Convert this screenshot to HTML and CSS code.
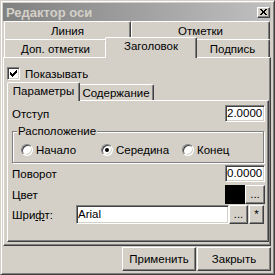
FILE: index.html
```html
<html>
    <head>
        <link rel="stylesheet" href="styles.css">
    </head>
    <body>
        <div class="window">
            <div class="titlebar">
                <span class="title">Редактор оси</span>
                <span class="close-btn">
                    <svg width="7" height="6" viewBox="0 0 7 6" shape-rendering="crispEdges">
                        <path d="M0 0h2v1h-2z M5 0h2v1h-2z M1 1h2v1h-2z M4 1h2v1h-2z M2 2h3v2h-3z M1 4h2v1h-2z M4 4h2v1h-2z M0 5h2v1h-2z M5 5h2v1h-2z" fill="#000"/>
                    </svg>
                </span>
            </div>

            <div class="tabs">
                <div class="tabrow">
                    <div class="tab w-line">Линия</div>
                    <div class="tab w-marks">Отметки</div>
                </div>
                <div class="tabrow">
                    <div class="tab w-extra">Доп. отметки</div>
                    <div class="tab w-title active">Заголовок</div>
                    <div class="tab w-sign">Подпись</div>
                </div>
            </div>

            <div class="panel">
                <div class="check-row">
                    <span class="checkbox">
                        <svg width="7" height="7" viewBox="0 0 7 7" shape-rendering="crispEdges">
                            <path d="M6 0h1v1h-1z M5 1h2v1h-2z M0 2h1v1h-1z M4 2h3v1h-3z M0 3h2v1h-2z M3 3h3v1h-3z M0 4h5v1h-5z M1 5h3v1h-3z M2 6h1v1h-1z" fill="#000"/>
                        </svg>
                    </span>
                    <span>Показывать</span>
                </div>

                <div class="subtabs">
                    <div class="subtab w-params active">Параметры</div>
                    <div class="subtab w-content">Содержание</div>
                </div>

                <div class="subpanel">
                    <div class="row">
                        <span>Отступ</span>
                        <span class="field num">2.0000</span>
                    </div>

                    <fieldset class="group">
                        <legend>Расположение</legend>
                        <div class="radios">
                            <div class="radio-opt"><span class="radio"></span>Начало</div>
                            <div class="radio-opt"><span class="radio on"></span>Середина</div>
                            <div class="radio-opt"><span class="radio"></span>Конец</div>
                        </div>
                    </fieldset>

                    <div class="row row-turn">
                        <span>Поворот</span>
                        <span class="field num">0.0000</span>
                    </div>

                    <div class="row row-color">
                        <span>Цвет</span>
                        <span class="picker">
                            <span class="swatch"></span>
                            <span class="btn-small">...</span>
                        </span>
                    </div>

                    <div class="row row-font">
                        <span class="font-label">Шри<u>ф</u>т:</span>
                        <span class="field font-field">Arial</span>
                        <span class="btn-small w-dots">...</span>
                        <span class="btn-small w-star">*</span>
                    </div>
                </div>
            </div>

            <div class="footer">
                <div class="btn">Применить</div>
                <div class="btn">Закрыть</div>
            </div>
        </div>
    </body>
</html>
```

FILE: styles.css
```css
body{
    margin: 0;
    background-color: #d4d0c8;
    font-family: "Liberation Sans", Arial, sans-serif;
    font-size: 11.5px;
    color: #000;
}
.window{
    width: 275px;
    height: 275px;
    box-sizing: border-box;
    border: 1px solid;
    border-color: #d4d0c8 #404040 #404040 #d4d0c8;
    box-shadow: inset 1px 1px #fff, inset -1px -1px #808080;
    padding: 2px 3px 2px 2px;
    display: flex;
    flex-direction: column;
}
.titlebar{
    height: 18px;
    flex: none;
    display: flex;
    align-items: center;
    justify-content: space-between;
    padding: 0 1px 0 3px;
    background: linear-gradient(to right, #808080, #c0c0c0);
}
.title{
    color: #d4d0c8;
    font-weight: bold;
    font-size: 13px;
}
.close-btn{
    width: 13px;
    height: 11px;
    box-sizing: border-box;
    background: #d4d0c8;
    border: 1px solid;
    border-color: #fff #404040 #404040 #fff;
    box-shadow: inset -1px -1px #808080;
    display: flex;
    align-items: center;
    justify-content: center;
}

/* tabs */
.tabs{
    display: flex;
    flex-direction: column;
    padding-left: 1px;
}
.tabrow, .subtabs{
    display: flex;
    height: 18px;
}
.tab, .subtab{
    box-sizing: border-box;
    height: 18px;
    border: 1px solid;
    border-color: #fff #404040 transparent #fff;
    border-bottom: none;
    border-radius: 2px 2px 0 0;
    box-shadow: inset -1px 0 #808080;
    background: #d4d0c8;
    padding-top: 3px;
    line-height: 13px;
    text-align: center;
    white-space: nowrap;
}
.tab.active, .subtab.active{
    position: relative;
    z-index: 1;
    margin: -2px -2px 0 -2px;
    padding-top: 2px;
}
.tab.active{
    height: 21px;
}
.w-line{ width: 127px; }
.w-marks{ width: 139px; }
.w-extra{ width: 103px; }
.w-title{ width: 92px; }
.w-sign{ width: 75px; }

.panel{
    height: 189px;
    flex: none;
    box-sizing: border-box;
    border: 1px solid;
    border-color: #fff #404040 #404040 #fff;
    box-shadow: inset -1px -1px #808080;
    padding: 0 1px 3px 3px;
}
.check-row{
    display: flex;
    align-items: center;
    gap: 5px;
    height: 13px;
    margin-top: 9px;
}
.checkbox{
    width: 13px;
    height: 13px;
    box-sizing: border-box;
    background: #fff;
    border: 1px solid;
    border-color: #808080 #fff #fff #808080;
    box-shadow: inset 1px 1px #404040, inset -1px -1px #d4d0c8;
    display: flex;
    align-items: center;
    justify-content: center;
}

.subtabs{
    height: 16px;
    margin-top: 4px;
    padding-left: 2px;
}
.subtab{
    height: 16px;
    padding-top: 2px;
}
.subtab.active{
    height: 19px;
}
.w-params{ width: 73px; }
.w-content{ width: 76px; }

.subpanel{
    height: 142px;
    box-sizing: border-box;
    border: 1px solid;
    border-color: #fff #404040 #404040 #fff;
    box-shadow: inset -1px -1px #808080;
    padding: 4px 3px 0 4px;
}
.row{
    display: flex;
    align-items: center;
    justify-content: space-between;
    height: 17px;
}
.row-turn{ margin-top: 2px; }
.row-color{
    height: 19px;
    margin-top: 3px;
}
.row-font{
    height: 19px;
    margin-top: 1px;
    justify-content: flex-start;
}
.field{
    box-sizing: border-box;
    height: 17px;
    background: #fff;
    border: 1px solid;
    border-color: #808080 #fff #fff #808080;
    box-shadow: inset 1px 1px #404040, inset -1px -1px #d4d0c8;
    padding: 0 1px;
    line-height: 15px;
    white-space: nowrap;
}
.num{ width: 40px; }

.group{
    margin: 3px 1px 0 0;
    padding: 5px 0 6px 0;
    border: 1px solid #808080;
    box-shadow: 1px 1px #fff, inset 1px 1px #fff;
    min-width: 0;
}
.group legend{
    margin-left: 4px;
    padding: 0 1px;
    line-height: 13px;
    background: #d4d0c8;
}
.radios{
    display: grid;
    grid-template-columns: 80px 81px auto;
    align-items: center;
    height: 13px;
    padding-left: 8px;
}
.radio-opt{
    display: flex;
    align-items: center;
    gap: 3px;
}
.radio{
    width: 12px;
    height: 12px;
    box-sizing: border-box;
    border-radius: 50%;
    background: #fff;
    border: 1px solid;
    border-color: #808080 #fff #fff #808080;
    box-shadow: inset 1px 1px #404040, inset -1px -1px #d4d0c8;
    display: flex;
    align-items: center;
    justify-content: center;
}
.radio.on:after{
    content: "";
    width: 4px;
    height: 4px;
    border-radius: 50%;
    background: #000;
}

.picker{
    display: flex;
}
.swatch{
    width: 20px;
    height: 19px;
    background: #000;
}
.btn-small, .btn{
    box-sizing: border-box;
    background: #d4d0c8;
    border: 1px solid;
    border-color: #fff #404040 #404040 #fff;
    box-shadow: inset -1px -1px #808080;
    text-align: center;
}
.btn-small{
    width: 20px;
    height: 19px;
    line-height: 17px;
}
.font-label{ width: 64px; }
.font-field{
    width: 153px;
    height: 19px;
    line-height: 17px;
}
.w-dots{ width: 19px; }
.w-star{
    width: 15px;
    margin-left: 1px;
}

.footer{
    display: flex;
    justify-content: flex-end;
    gap: 1px;
    margin-top: 1px;
}
.btn{
    width: 74px;
    height: 24px;
    line-height: 22px;
}
```
